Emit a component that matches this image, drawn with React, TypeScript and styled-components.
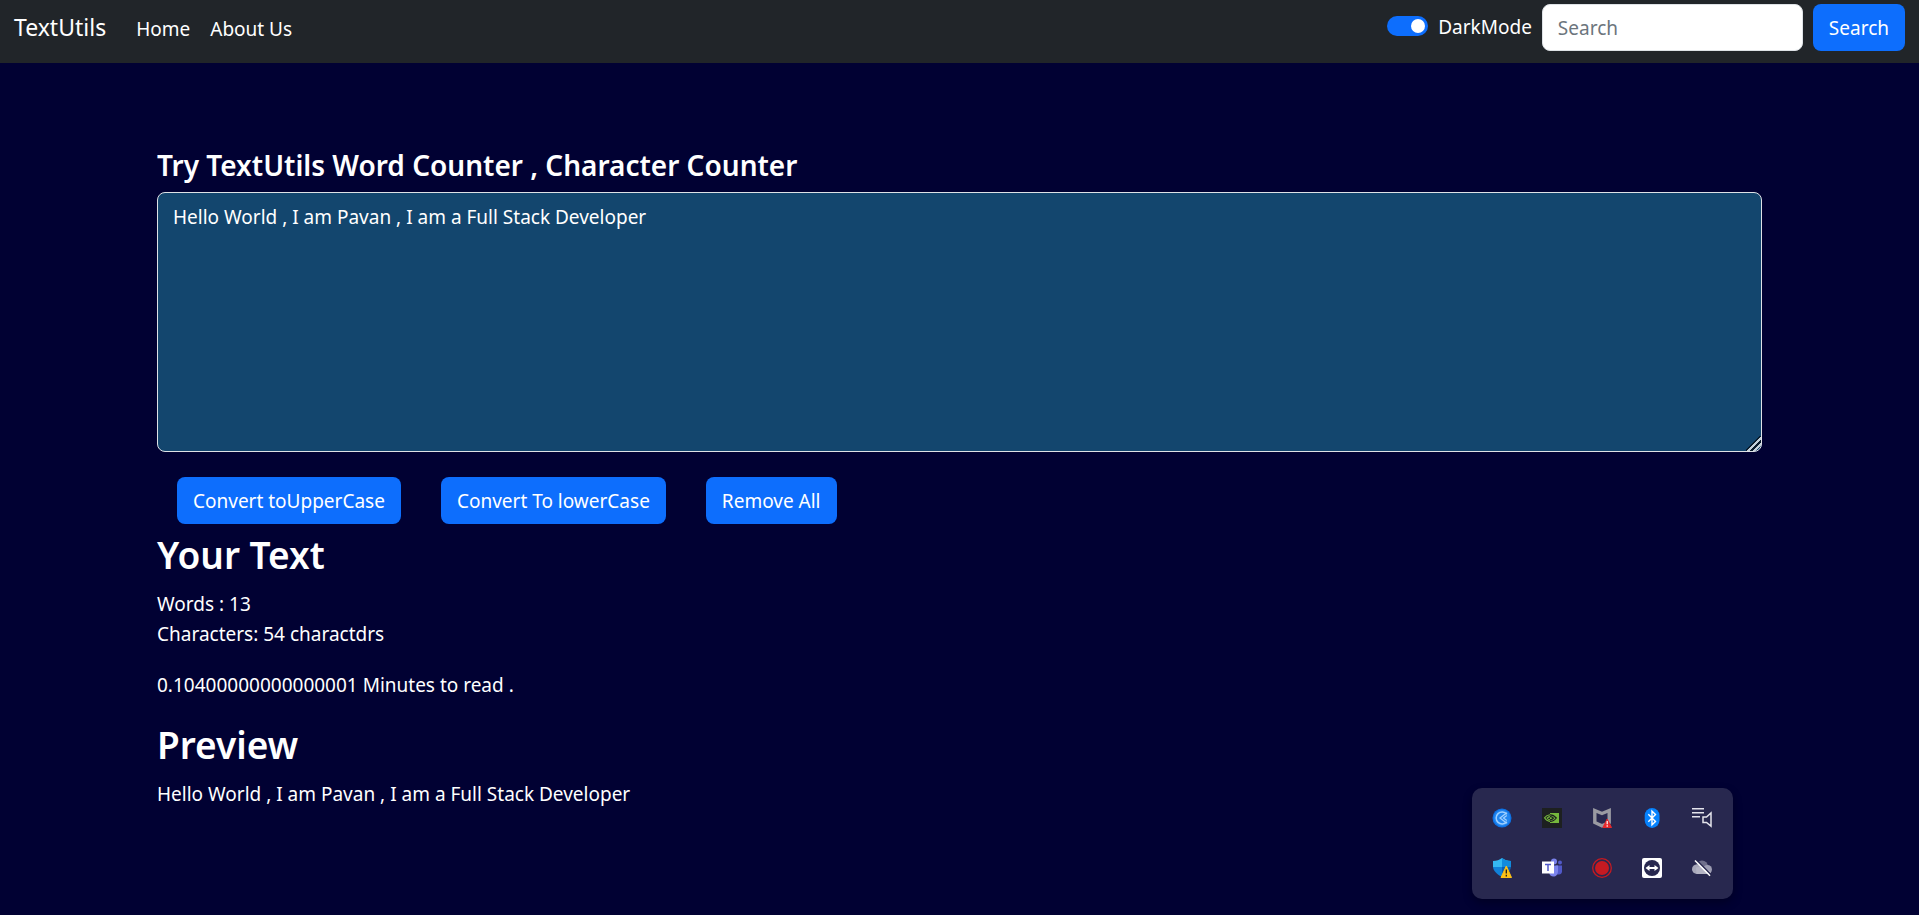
import React, { useState } from "react";
import styled, { createGlobalStyle } from "styled-components";

const GlobalStyle = createGlobalStyle<{ $dark: boolean }>`
  *, *::before, *::after { box-sizing: border-box; }
  body {
    margin: 0;
    min-height: 100vh;
    background: ${(p) => (p.$dark ? "#010133" : "#ffffff")};
    color: ${(p) => (p.$dark ? "#ffffff" : "#212529")};
    font-family: "Segoe UI", "Noto Sans", "Open Sans", sans-serif;
    font-size: 19px;
    line-height: 30px;
  }
`;

const Navbar = styled.nav`
  display: flex;
  align-items: flex-start;
  justify-content: space-between;
  min-height: 63px;
  padding: 4px 14px 12px;
  background: #212529;
  color: #ffffff;
`;

const NavGroup = styled.div`
  display: flex;
  align-items: baseline;
`;

const Brand = styled.a`
  margin-right: 20px;
  color: #ffffff;
  font-size: 23px;
  line-height: 46px;
  text-decoration: none;
`;

const NavList = styled.ul`
  display: flex;
  margin: 0;
  padding: 0;
  list-style: none;
`;

const NavLink = styled.a`
  display: block;
  padding: 0 10px;
  color: #ffffff;
  text-decoration: none;
`;

const SearchForm = styled.form`
  display: flex;
  gap: 10px;
`;

const SwitchLabel = styled.label`
  display: flex;
  align-items: center;
  gap: 10px;
  height: 46px;
`;

const Switch = styled.input`
  appearance: none;
  display: flex;
  align-items: center;
  width: 41px;
  height: 20px;
  margin: 0 0 2px;
  padding: 3px;
  border-radius: 10px;
  background: #6c757d;
  cursor: pointer;

  &::before {
    content: "";
    width: 14px;
    height: 14px;
    border-radius: 50%;
    background: #ffffff;
  }
  &:checked {
    justify-content: flex-end;
    background: #0d6efd;
  }
`;

const SearchInput = styled.input`
  width: 261px;
  height: 47px;
  padding: 0 15px;
  border: 1px solid #dee2e6;
  border-radius: 8px;
  background: #ffffff;
  color: #212529;
  font: inherit;

  &::placeholder { color: #6c757d; opacity: 1; }
`;

const Button = styled.button`
  height: 47px;
  padding: 0 16px;
  border: 0;
  border-radius: 8px;
  background: #0d6efd;
  color: #ffffff;
  font: inherit;
  white-space: nowrap;
  cursor: pointer;
`;

const Container = styled.main`
  width: 84%;
  max-width: 1605px;
  margin: 0 auto;
  padding: 84px 0 40px;
`;

const FormTitle = styled.h1`
  margin: 0 0 8px;
  font-size: 28px;
  font-weight: 600;
  line-height: 37px;
`;

const TextBox = styled.textarea<{ $dark: boolean }>`
  display: block;
  width: 100%;
  height: 260px;
  padding: 9px 15px;
  border: 1px solid #dee2e6;
  border-radius: 8px;
  background: ${(p) => (p.$dark ? "#13466e" : "#ffffff")};
  color: inherit;
  font: inherit;
  resize: vertical;
  outline: none;

  &::-webkit-resizer {
    background: linear-gradient(
      135deg,
      transparent 46%,
      #0a1c2c 46% 52%,
      #c3d0da 52% 62%,
      #0a1c2c 62% 72%,
      #c3d0da 72% 82%,
      transparent 82%
    );
  }
`;

const Actions = styled.div`
  display: flex;
  flex-wrap: wrap;
  gap: 40px;
  padding: 25px 20px 7px;
`;

const SectionTitle = styled.h2`
  margin: 0 0 10px;
  font-size: 37px;
  font-weight: 600;
  line-height: 48px;
`;

const Paragraph = styled.p`
  margin: 0 0 21px;
`;

const Tray = styled.aside`
  position: fixed;
  right: 186px;
  bottom: 16px;
  display: grid;
  grid-template-columns: repeat(5, 50px);
  grid-auto-rows: 50px;
  place-items: center;
  padding: 5px 6px 6px 5px;
  border-radius: 10px;
  background: #28284f;
  box-shadow: 0 4px 10px rgba(0, 0, 0, 0.3);
`;

const TrayIcon = styled.svg`
  display: block;
  width: 20px;
  height: 20px;
  overflow: visible;
`;

const TrayIcons = () => (
  <Tray aria-label="Hidden tray icons">
    <TrayIcon viewBox="0 0 20 20" fill="none">
      <circle cx="10" cy="10" r="9.5" fill="#0d72e6" />
      <circle cx="10" cy="10" r="8.2" fill="#2186f0" />
      <path d="M14.8 6.2A6 6 0 1 0 14.8 13.8" stroke="#9fd0ff" strokeWidth="1.5" />
      <path d="M14.8 4.8L8 10l6.800 5.200M14.800 7.500L11.500 10l3.300 2.500" stroke="#9fd0ff" strokeWidth="1.300" />
    </TrayIcon>
    <TrayIcon viewBox="0 0 20 20" fill="none">
      <path fill="#1d2020" d="M0 0h20v20H0z" />
      <path fill="#76b93c" d="M8 5h9v10H8z" />
      <path
        d="M8 6.800c-2.500.2-4.300 1.400-5.500 3 1.300 2.200 3.200 3.400 5.500 3.600M8 8.600c-1.300.2-2.200.8-2.800 1.600.7 1 1.600 1.500 2.800 1.600"
        stroke="#76b93c"
        strokeWidth="1.100"
      />
      <path
        d="M8 6.800c2.800-.1 4.600 1.200 6.300 3.200-1.600 2.200-3.600 3.400-6.300 3.400M8 8.600c1.600-.1 2.600.6 3.400 1.500-.9 1.200-2 1.700-3.400 1.700"
        stroke="#1d2020"
        strokeWidth="1.200"
      />
    </TrayIcon>
    <TrayIcon viewBox="0 0 20 20" fill="none">
      <path d="M2.800 2.500l7.200 3 7.200-3V14.500L10 17.800 2.800 14.500z" stroke="#9a9aa2" strokeWidth="3.400" />
      <path d="M15.200 11L19.500 19.500h-8.600z" fill="#e5282c" stroke="#e5282c" strokeLinejoin="round" />
      <path d="M15.200 13v3.200M15.200 17.300v1.400" stroke="#ffffff" strokeWidth="1.200" />
    </TrayIcon>
    <TrayIcon viewBox="0 0 20 20" fill="none">
      <rect x="2.700" width="14.800" height="20" rx="7.400" fill="#0682fd" />
      <path d="M6.300 6.300l7.200 7.200-3.500 3.300V3.200l3.500 3.300-7.200 7.200" stroke="#ffffff" strokeWidth="1.400" />
    </TrayIcon>
    <TrayIcon viewBox="0 0 20 20" fill="none">
      <path d="M0 .8h12M0 4.800h12M0 8.800h8" stroke="#e4e4ec" strokeWidth="1.400" />
      <path d="M11 9h3.500L19 5v13.200L14.500 14.500H11z" stroke="#e4e4ec" strokeWidth="1.500" />
    </TrayIcon>
    <TrayIcon viewBox="0 0 20 20" fill="none">
      <path d="M10 0c2.500 2 5.500 3 9 3v6H1V3c3.500 0 6.500-1 9-3z" fill="#35b8f1" />
      <path d="M10 0c2.500 2 5.500 3 9 3v6h-9z" fill="#128bdc" />
      <path d="M1 9h9v10C5 16.500 1.500 13 1 9z" fill="#1181d8" />
      <path d="M10 9h9c-.5 4-4 7.500-9 10z" fill="#0a5fb4" />
      <path d="M14.300 8L19.500 19.500H9z" fill="#fdc116" stroke="#fdc116" strokeLinejoin="round" />
      <path d="M14.300 11.500v4M14.300 16.800v1.600" stroke="#1a1a1a" strokeWidth="1.300" />
    </TrayIcon>
    <TrayIcon viewBox="0 0 20 20" fill="none">
      <circle cx="18" cy="4.500" r="2" fill="#5159c9" />
      <path d="M14 7.500h6v6c0 2-1.500 3-3 3h-3z" fill="#5159c9" />
      <circle cx="12" cy="3.500" r="3" fill="#7b83eb" />
      <path d="M7 7.500h9V13c0 3.500-2 5.500-4.500 5.500S7.500 17 7 14.500z" fill="#7b83eb" />
      <path d="M0 3.500h12v12H0z" fill="#ffffff" />
      <path d="M3 6.500h6M6 6.500v6.500" stroke="#5159c9" strokeWidth="1.500" />
    </TrayIcon>
    <TrayIcon viewBox="0 0 20 20" fill="none">
      <circle cx="10" cy="10" r="9.300" stroke="#c51a22" strokeWidth="1.300" />
      <circle cx="10" cy="10" r="7" fill="#c51a22" />
    </TrayIcon>
    <TrayIcon viewBox="0 0 20 20" fill="none">
      <rect width="20" height="20" rx="2" fill="#ffffff" />
      <circle cx="10" cy="10" r="8" fill="#28284f" />
      <path d="M3.500 10l4-3v2h5V7l4 3-4 3v-2h-5v2z" fill="#ffffff" />
    </TrayIcon>
    <TrayIcon viewBox="0 0 20 20" fill="none">
      <circle cx="10" cy="8.500" r="6" fill="#70708c" />
      <circle cx="15.500" cy="11.500" r="4.500" fill="#9c9cb2" />
      <circle cx="4.800" cy="11.200" r="4.800" fill="#a8a8ba" />
      <path d="M4.500 16L4 9.500l5-1L19 14c-.8 1.300-1.900 2-3.500 2z" fill="#b4b4c4" />
      <path d="M4.800 2.200L19.300 17" stroke="#28284f" strokeWidth="1.500" />
      <path d="M3 2.500l15 15.300" stroke="#ffffff" strokeWidth="1.500" />
    </TrayIcon>
  </Tray>
);

export default function App() {
  const [dark, setDark] = useState(true);
  const [text, setText] = useState("Hello World , I am Pavan , I am a Full Stack Developer");
  const words = text.split(" ").length;

  return (
    <>
      <GlobalStyle $dark={dark} />
      <Navbar>
        <NavGroup>
          <Brand href="#">TextUtils</Brand>
          <NavList>
            <li><NavLink href="#">Home</NavLink></li>
            <li><NavLink href="#about">About Us</NavLink></li>
          </NavList>
        </NavGroup>
        <SearchForm role="search" onSubmit={(e) => e.preventDefault()}>
          <SwitchLabel>
            <Switch type="checkbox" role="switch" checked={dark} onChange={(e) => setDark(e.target.checked)} />
            DarkMode
          </SwitchLabel>
          <SearchInput type="search" placeholder="Search" aria-label="Search" />
          <Button type="submit">Search</Button>
        </SearchForm>
      </Navbar>
      <Container>
        <FormTitle id="form-title">Try TextUtils Word Counter , Character Counter</FormTitle>
        <TextBox
          $dark={dark}
          aria-labelledby="form-title"
          spellCheck={false}
          value={text}
          onChange={(e) => setText(e.target.value)}
        />
        <Actions>
          <Button type="button" onClick={() => setText(text.toUpperCase())}>Convert toUpperCase</Button>
          <Button type="button" onClick={() => setText(text.toLowerCase())}>Convert To lowerCase</Button>
          <Button type="button" onClick={() => setText("")}>Remove All</Button>
        </Actions>
        <SectionTitle>Your Text</SectionTitle>
        <Paragraph>
          Words : {words}
          <br />
          Characters: {text.length} charactdrs
        </Paragraph>
        <Paragraph>{0.008 * words} Minutes to read .</Paragraph>
        <SectionTitle>Preview</SectionTitle>
        <Paragraph>{text}</Paragraph>
      </Container>
      <TrayIcons />
    </>
  );
}
